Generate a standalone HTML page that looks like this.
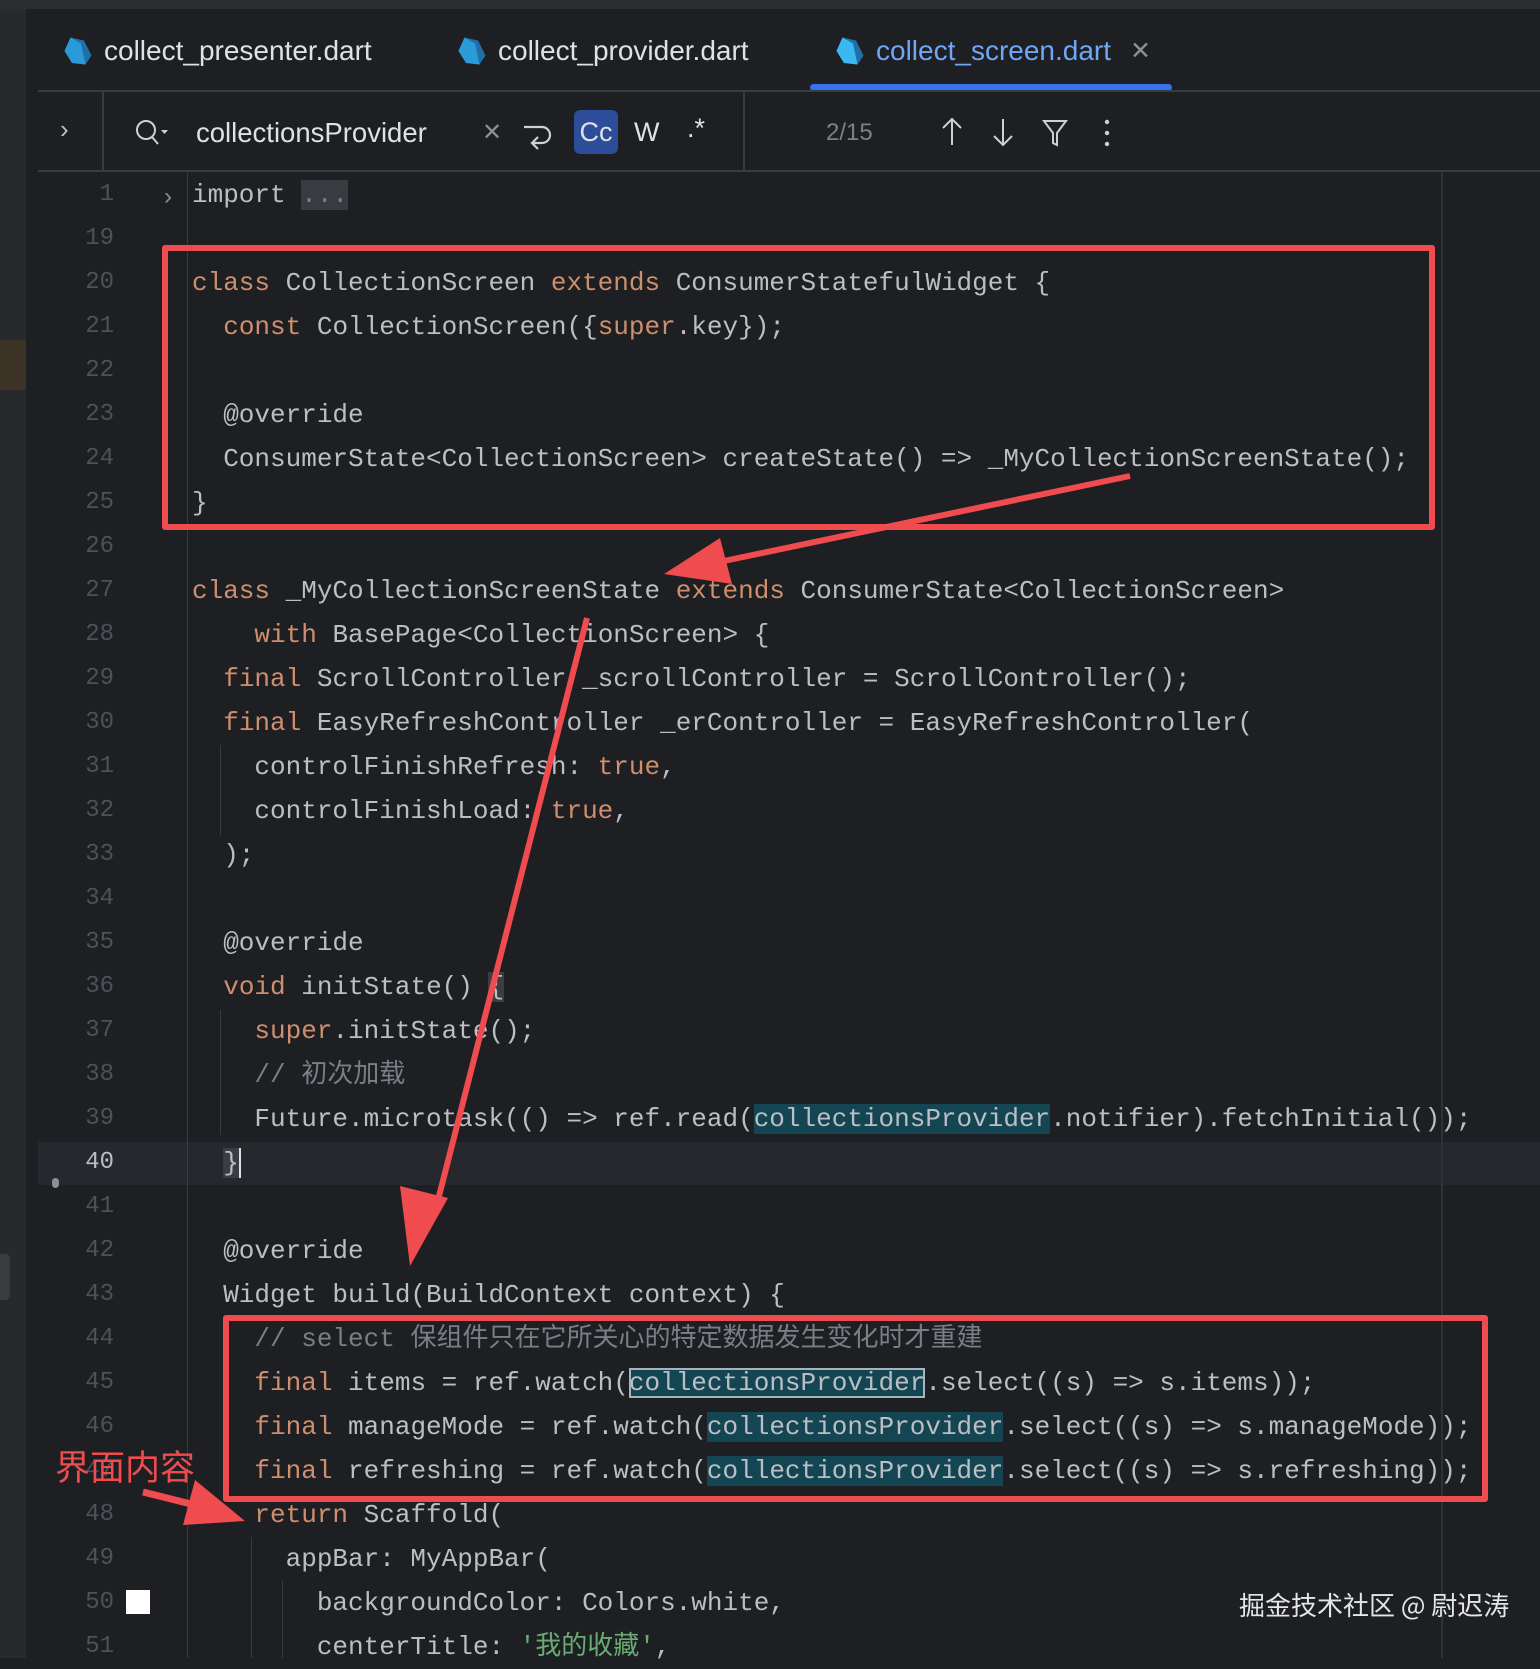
<!DOCTYPE html>
<html><head><meta charset="utf-8"><style>
*{margin:0;padding:0;box-sizing:border-box}
body{width:1540px;height:1658px;background:#1e1f22;position:relative;overflow:hidden;font-family:"Liberation Sans","Noto Sans CJK SC",sans-serif;color:#dfe1e5}
.abs{position:absolute}
.code{position:absolute;left:192px;height:44px;line-height:44px;font-family:"Liberation Mono","Noto Sans CJK SC",monospace;font-size:26px;white-space:pre;color:#bcbec4}
.ln{position:absolute;right:1426px;height:44px;line-height:44px;font-family:"Liberation Mono",monospace;font-size:24px;color:#4e5157;text-align:right}
.k{color:#cf8e6d}.c{color:#7a7e85}.s{color:#6aab73}
.h{background:#134652}
.hb{background:#134652;outline:2px solid #a8b4bc;outline-offset:-2px}
.tab{position:absolute;top:35px;font-size:28px;color:#dfe1e5}
.red{position:absolute;border:6px solid #f04b4f;border-radius:3px}
.guide{position:absolute;width:1px;background:#393b40}
</style></head><body>
<div class="abs" style="left:0;top:0;width:1540px;height:9px;background:#2b2d30"></div>
<div class="abs" style="left:0;top:9px;width:26px;height:1649px;background:#27292c"></div>
<div class="abs" style="left:0;top:340px;width:36px;height:50px;background:#3d3226"></div>
<div class="abs" style="left:0;top:1254px;width:10px;height:46px;background:#3a3c40;border-radius:0 5px 5px 0"></div>
<div class="abs" style="left:26px;top:9px;width:12px;height:1649px;background:#1e1f22"></div>
<!-- tabs -->
<svg class="abs" style="left:63px;top:36px" width="30" height="30" viewBox="0 0 20 20"><path d="M5 1 L14 3 L19 13 L15 19 L6 18 L1 10 Z" fill="#1f6fa8"/><path d="M5 1 L12 5 L15 19 L6 18 L1 10 Z" fill="#2a9ad8"/></svg>
<div class="tab" style="left:104px">collect_presenter.dart</div>
<svg class="abs" style="left:457px;top:36px" width="30" height="30" viewBox="0 0 20 20"><path d="M5 1 L14 3 L19 13 L15 19 L6 18 L1 10 Z" fill="#1f6fa8"/><path d="M5 1 L12 5 L15 19 L6 18 L1 10 Z" fill="#2a9ad8"/></svg>
<div class="tab" style="left:498px">collect_provider.dart</div>
<svg class="abs" style="left:835px;top:36px" width="30" height="30" viewBox="0 0 20 20"><path d="M5 1 L14 3 L19 13 L15 19 L6 18 L1 10 Z" fill="#1f6fa8"/><path d="M5 1 L12 5 L15 19 L6 18 L1 10 Z" fill="#3bb8f0"/></svg>
<div class="tab" style="left:876px;color:#6fa6f5">collect_screen.dart</div>
<div class="tab" style="left:1130px;color:#8c8f94;font-size:25px;top:36px">✕</div>
<div class="abs" style="left:810px;top:84px;width:362px;height:7px;background:#3574f0;border-radius:4px"></div>
<div class="abs" style="left:38px;top:90px;width:1502px;height:2px;background:#393b40"></div>
<!-- search bar -->
<div class="abs" style="left:60px;top:114px;font-size:26px;color:#bcbec4">›</div>
<div class="abs" style="left:102px;top:92px;width:2px;height:78px;background:#393b40"></div>
<svg class="abs" style="left:134px;top:118px" width="36" height="30" viewBox="0 0 36 30"><circle cx="12" cy="12" r="9" fill="none" stroke="#ced0d6" stroke-width="2"/><path d="M18 19 L24 26" stroke="#ced0d6" stroke-width="2"/><path d="M27 12 L34 12 L30.5 16Z" fill="#ced0d6"/></svg>
<div class="abs" style="left:196px;top:117px;font-size:27.5px;color:#dfe1e5">collectionsProvider</div>
<div class="abs" style="left:482px;top:118px;font-size:24px;color:#8c8f94">✕</div>
<svg class="abs" style="left:520px;top:117px" width="34" height="34" viewBox="0 0 34 34"><path d="M12 26 H22 A8 8 0 0 0 22 10 H4" fill="none" stroke="#ced0d6" stroke-width="2.2"/><path d="M18 20 L12 26 L18 32" fill="none" stroke="#ced0d6" stroke-width="2.2"/></svg>
<div class="abs" style="left:574px;top:110px;width:44px;height:44px;background:#2d4d9a;border-radius:6px;color:#dfe1e5;font-size:27px;text-align:center;line-height:44px">Cc</div>
<div class="abs" style="left:634px;top:117px;font-size:27px;color:#dfe1e5">W</div>
<div class="abs" style="left:687px;top:113px;font-size:27px;color:#dfe1e5">.*</div>
<div class="abs" style="left:743px;top:92px;width:2px;height:78px;background:#393b40"></div>
<div class="abs" style="left:826px;top:119px;font-size:24px;color:#7d8086">2/15</div>
<svg class="abs" style="left:938px;top:117px" width="200" height="32" viewBox="0 0 200 32"><path d="M14 2 V28 M5 11 L14 2 L23 11" fill="none" stroke="#ced0d6" stroke-width="2"/><path d="M65 2 V28 M56 19 L65 28 L74 19" fill="none" stroke="#ced0d6" stroke-width="2"/><path d="M106 4 H128 L119 16 V28 L115 26 V16 Z" fill="none" stroke="#ced0d6" stroke-width="2"/><circle cx="169" cy="5" r="2.2" fill="#ced0d6"/><circle cx="169" cy="16" r="2.2" fill="#ced0d6"/><circle cx="169" cy="27" r="2.2" fill="#ced0d6"/></svg>
<div class="abs" style="left:38px;top:170px;width:1502px;height:2px;background:#393b40"></div>
<!-- editor decorations -->
<div class="abs" style="left:38px;top:1142px;width:1502px;height:43px;background:#26282e"></div>
<div class="abs" style="left:1441px;top:172px;width:2px;height:1486px;background:#2f3136"></div>
<div class="guide" style="left:187px;top:172px;height:1486px"></div>
<div class="guide" style="left:220px;top:745px;height:90px"></div>
<div class="guide" style="left:220px;top:1010px;height:125px"></div>
<div class="guide" style="left:251px;top:1537px;height:121px"></div>
<div class="guide" style="left:282px;top:1580px;height:78px"></div>
<div class="abs" style="left:52px;top:1178px;width:7px;height:10px;background:#8c8f94;border-radius:4px"></div>
<div class="abs" style="left:126px;top:1590px;width:24px;height:24px;background:#fff"></div>
<div class="abs" style="left:164px;top:183px;font-size:24px;color:#8c8f94">›</div>

<div class="ln" style="top:173px">1</div>
<div class="ln" style="top:217px">19</div>
<div class="ln" style="top:261px">20</div><div class="ln" style="top:305px">21</div><div class="ln" style="top:349px">22</div><div class="ln" style="top:393px">23</div><div class="ln" style="top:437px">24</div><div class="ln" style="top:481px">25</div><div class="ln" style="top:525px">26</div><div class="ln" style="top:569px">27</div><div class="ln" style="top:613px">28</div><div class="ln" style="top:657px">29</div><div class="ln" style="top:701px">30</div><div class="ln" style="top:745px">31</div><div class="ln" style="top:789px">32</div><div class="ln" style="top:833px">33</div><div class="ln" style="top:877px">34</div><div class="ln" style="top:921px">35</div><div class="ln" style="top:965px">36</div><div class="ln" style="top:1009px">37</div><div class="ln" style="top:1053px">38</div><div class="ln" style="top:1097px">39</div><div class="ln" style="top:1141px;color:#bcbec4">40</div><div class="ln" style="top:1185px">41</div><div class="ln" style="top:1229px">42</div><div class="ln" style="top:1273px">43</div><div class="ln" style="top:1317px">44</div><div class="ln" style="top:1361px">45</div><div class="ln" style="top:1405px">46</div><div class="ln" style="top:1449px">47</div><div class="ln" style="top:1493px">48</div><div class="ln" style="top:1537px">49</div><div class="ln" style="top:1581px">50</div><div class="ln" style="top:1625px">51</div>

<div class="code" style="top:173px">import <span style="background:#393b40;color:#7a7e85">...</span></div>
<div class="code" style="top:261px"><span class="k">class</span> CollectionScreen <span class="k">extends</span> ConsumerStatefulWidget {</div>
<div class="code" style="top:305px">  <span class="k">const</span> CollectionScreen({<span class="k">super</span>.key});</div>
<div class="code" style="top:393px">  @override</div>
<div class="code" style="top:437px">  ConsumerState&lt;CollectionScreen&gt; createState() =&gt; _MyCollectionScreenState();</div>
<div class="code" style="top:481px">}</div>
<div class="code" style="top:569px"><span class="k">class</span> _MyCollectionScreenState <span class="k">extends</span> ConsumerState&lt;CollectionScreen&gt;</div>
<div class="code" style="top:613px">    <span class="k">with</span> BasePage&lt;CollectionScreen&gt; {</div>
<div class="code" style="top:657px">  <span class="k">final</span> ScrollController _scrollController = ScrollController();</div>
<div class="code" style="top:701px">  <span class="k">final</span> EasyRefreshController _erController = EasyRefreshController(</div>
<div class="code" style="top:745px">    controlFinishRefresh: <span class="k">true</span>,</div>
<div class="code" style="top:789px">    controlFinishLoad: <span class="k">true</span>,</div>
<div class="code" style="top:833px">  );</div>
<div class="code" style="top:921px">  @override</div>
<div class="code" style="top:965px">  <span class="k">void</span> initState() <span style="background:#3b3d42">{</span></div>
<div class="code" style="top:1009px">    <span class="k">super</span>.initState();</div>
<div class="code" style="top:1053px">    <span class="c">// 初次加载</span></div>
<div class="code" style="top:1097px">    Future.microtask(() =&gt; ref.read(<span class="h">collectionsProvider</span>.notifier).fetchInitial());</div>
<div class="code" style="top:1141px">  <span style="background:#3b3d42">}</span><span style="border-left:2px solid #dfe1e5"></span></div>
<div class="code" style="top:1229px">  @override</div>
<div class="code" style="top:1273px">  Widget build(BuildContext context) {</div>
<div class="code" style="top:1317px">    <span class="c">// select 保组件只在它所关心的特定数据发生变化时才重建</span></div>
<div class="code" style="top:1361px">    <span class="k">final</span> items = ref.watch(<span class="hb">collectionsProvider</span>.select((s) =&gt; s.items));</div>
<div class="code" style="top:1405px">    <span class="k">final</span> manageMode = ref.watch(<span class="h">collectionsProvider</span>.select((s) =&gt; s.manageMode));</div>
<div class="code" style="top:1449px">    <span class="k">final</span> refreshing = ref.watch(<span class="h">collectionsProvider</span>.select((s) =&gt; s.refreshing));</div>
<div class="code" style="top:1493px">    <span class="k">return</span> Scaffold(</div>
<div class="code" style="top:1537px">      appBar: MyAppBar(</div>
<div class="code" style="top:1581px">        backgroundColor: Colors.white,</div>
<div class="code" style="top:1625px">        centerTitle: <span class="s">'我的收藏'</span>,</div>

<!-- annotations -->
<div class="red" style="left:162px;top:245px;width:1273px;height:285px"></div>
<div class="red" style="left:223px;top:1315px;width:1265px;height:187px"></div>
<svg class="abs" style="left:0;top:0" width="1540" height="1658">
<g fill="#f04b4f" stroke="#f04b4f">
<line x1="1130" y1="476" x2="700" y2="566" stroke-width="6"/>
<polygon points="664,574 720,538 732,584" stroke="none"/>
<line x1="587" y1="618" x2="438" y2="1200" stroke-width="6"/>
<polygon points="410,1266 400,1186 448,1198" stroke="none"/>
<line x1="143" y1="1492" x2="215" y2="1510" stroke-width="7"/>
<polygon points="245,1521 195,1480 183,1525" stroke="none"/>
</g></svg>
<div class="abs" style="left:55px;top:1440px;font-size:35px;color:#f04b4f;font-family:'Noto Sans CJK SC',sans-serif">界面内容</div>
<div class="abs" style="left:1239px;top:1586px;font-size:26px;color:#e4e5e8;font-family:'Noto Sans CJK SC',sans-serif">掘金技术社区 @ 尉迟涛</div>
</body></html>
